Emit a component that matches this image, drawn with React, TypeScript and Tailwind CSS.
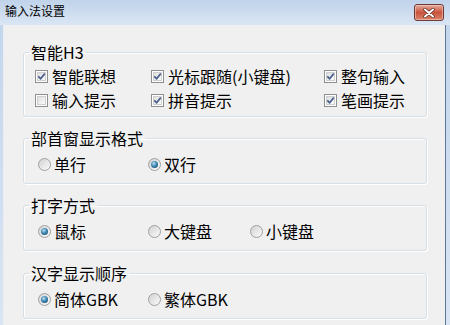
import React from "react";

const font = { fontFamily: '"Noto Sans CJK SC", "Noto Sans", sans-serif' };

function Check({ checked }: { checked: boolean }) {
  return (
    <span className="relative flex h-[13px] w-[13px] shrink-0 items-center justify-center border border-[#8e8f8f] bg-white">
      <span className="absolute inset-[1px] border border-[#cfcfcf] bg-gradient-to-br from-[#dedede] to-[#fbfbfb]" />
      {checked && (
        <svg className="relative" width="9" height="9" viewBox="0 0 9 9">
          <path d="M1.3 4.3 L3.6 6.8 L7.8 1.6" stroke="#4a5f8e" strokeWidth="1.7" fill="none" />
        </svg>
      )}
    </span>
  );
}

function Radio({ checked }: { checked: boolean }) {
  return (
    <span className="flex h-[13px] w-[13px] shrink-0 items-center justify-center rounded-full border border-[#a0a0a0] bg-gradient-to-br from-[#d2d2d2] to-[#fbfbfb]">
      {checked && (
        <span className="h-[7px] w-[7px] rounded-full bg-[radial-gradient(circle_at_40%_35%,#b9e3f6_0%,#3f86b0_45%,#123e5e_100%)]" />
      )}
    </span>
  );
}

function CheckItem({ label, checked }: { label: string; checked: boolean }) {
  return (
    <div className="flex h-[24px] items-center gap-[4px]">
      <Check checked={checked} />
      <span className="text-[16px] leading-[18px] text-black">{label}</span>
    </div>
  );
}

function RadioItem({ label, checked }: { label: string; checked: boolean }) {
  return (
    <div className="flex h-[24px] items-center gap-[3px]">
      <Radio checked={checked} />
      <span className="text-[16px] leading-[18px] text-black">{label}</span>
    </div>
  );
}

function Group({ title, children, className }: { title: string; children: React.ReactNode; className?: string }) {
  return (
    <fieldset
      className={
        "w-[404px] rounded-[3px] border border-[#d5dfe5] shadow-[inset_1px_1px_0_#ffffff,1px_1px_0_#ffffff] " +
        (className ?? "")
      }
    >
      <legend className="ml-[5px] px-[2px] text-[16px] leading-[18px] text-black">{title}</legend>
      {children}
    </fieldset>
  );
}

export default function App() {
  return (
    <div
      className="flex h-[325px] w-[450px] flex-col overflow-hidden bg-gradient-to-b from-[#c2d5eb] to-[#d9e5f3]"
      style={font}
    >
      <div className="flex h-[25px] shrink-0 items-start justify-between bg-gradient-to-b from-[#c0d3ea] to-[#dae6f4] pl-[5px] pr-[6px]">
        <span className="mt-[4px] text-[12px] leading-[14px] text-black">输入法设置</span>
        <div className="mt-[4px] flex h-[17px] w-[30px] items-center justify-center rounded-[3px] border border-[#6b3b33] bg-gradient-to-b from-[#e4ab9e] via-[#c9533c] to-[#d9836c] shadow-[inset_0_0_0_1px_rgba(255,220,210,0.5)]">
          <svg width="12" height="10" viewBox="0 0 12 10">
            <path d="M2 1.5 L10 8.5 M10 1.5 L2 8.5" stroke="#5a2a22" strokeWidth="3.4" strokeLinecap="round" />
            <path d="M2 1.5 L10 8.5 M10 1.5 L2 8.5" stroke="#ffffff" strokeWidth="2" strokeLinecap="round" />
          </svg>
        </div>
      </div>
      <div className="ml-[3px] mr-[4px] flex flex-1 flex-col border-r border-[#5d7896] border-l border-l-[#e9eef4] bg-[#f0f0f0] pl-[19px] pt-[18px]">
        <Group title="智能H3" className="pt-[3px] pb-[4px]">
          <div className="grid grid-cols-[116px_173px_auto] pl-[11px]">
            <CheckItem label="智能联想" checked />
            <CheckItem label="光标跟随(小键盘)" checked />
            <CheckItem label="整句输入" checked />
            <CheckItem label="输入提示" checked={false} />
            <CheckItem label="拼音提示" checked />
            <CheckItem label="笔画提示" checked />
          </div>
        </Group>
        <Group title="部首窗显示格式" className="mt-[12px] pt-[5px] pb-[7px]">
          <div className="grid grid-cols-[110px_auto] pl-[14px]">
            <RadioItem label="单行" checked={false} />
            <RadioItem label="双行" checked />
          </div>
        </Group>
        <Group title="打字方式" className="mt-[12px] pt-[5px] pb-[7px]">
          <div className="grid grid-cols-[110px_102px_auto] pl-[14px]">
            <RadioItem label="鼠标" checked />
            <RadioItem label="大键盘" checked={false} />
            <RadioItem label="小键盘" checked={false} />
          </div>
        </Group>
        <Group title="汉字显示顺序" className="mt-[13px] pt-[5px] pb-[7px]">
          <div className="grid grid-cols-[110px_auto] pl-[14px]">
            <RadioItem label="简体GBK" checked />
            <RadioItem label="繁体GBK" checked={false} />
          </div>
        </Group>
      </div>
    </div>
  );
}
